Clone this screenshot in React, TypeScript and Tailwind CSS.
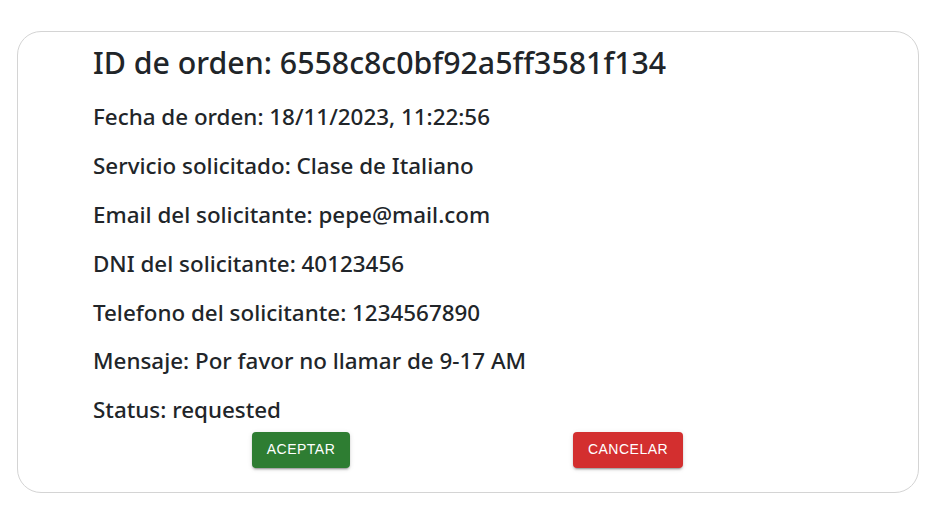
const order = {
  id: '6558c8c0bf92a5ff3581f134',
  fecha: '18/11/2023, 11:22:56',
  servicio: 'Clase de Italiano',
  email: 'pepe@mail.com',
  dni: '40123456',
  telefono: '1234567890',
  mensaje: 'Por favor no llamar de 9-17 AM',
  status: 'requested',
};

export default function App() {
  const rows: [string, string][] = [
    ['Fecha de orden', order.fecha],
    ['Servicio solicitado', order.servicio],
    ['Email del solicitante', order.email],
    ['DNI del solicitante', order.dni],
    ['Telefono del solicitante', order.telefono],
    ['Mensaje', order.mensaje],
    ['Status', order.status],
  ];

  return (
    <div className="min-h-[511px] w-[935px] bg-white pt-[31px] pl-[17px] pr-[16px] font-['Noto_Sans',sans-serif] text-[#212529]">
      <div className="h-[462px] rounded-[24px] border border-[#d4d4d4] pt-[13px] pl-[75px]">
        <div className="flex flex-col gap-[22.4px]">
          <h3 className="mb-[1px] text-[30.3px] font-medium leading-[36px]">ID de orden: {order.id}</h3>
          {rows.map(([label, value]) => (
            <h5 key={label} className="text-[22.4px] font-medium leading-[26.4px]">
              {label}: {value}
            </h5>
          ))}
        </div>

        {/* Actions */}
        <div className="mt-[8px] ml-[159px] flex gap-[223px]">
          <button className="h-[36px] w-[98px] rounded-[4px] bg-[#2e7d32] font-['Liberation_Sans',Arial,sans-serif] text-[14px] uppercase tracking-[0.5px] text-white shadow-[0_3px_1px_-2px_rgba(0,0,0,0.2),0_2px_2px_0_rgba(0,0,0,0.14),0_1px_5px_0_rgba(0,0,0,0.12)]">
            Aceptar
          </button>
          <button className="h-[36px] w-[110px] rounded-[4px] bg-[#d32f2f] font-['Liberation_Sans',Arial,sans-serif] text-[14px] uppercase tracking-[0.5px] text-white shadow-[0_3px_1px_-2px_rgba(0,0,0,0.2),0_2px_2px_0_rgba(0,0,0,0.14),0_1px_5px_0_rgba(0,0,0,0.12)]">
            Cancelar
          </button>
        </div>
      </div>
    </div>
  );
}
